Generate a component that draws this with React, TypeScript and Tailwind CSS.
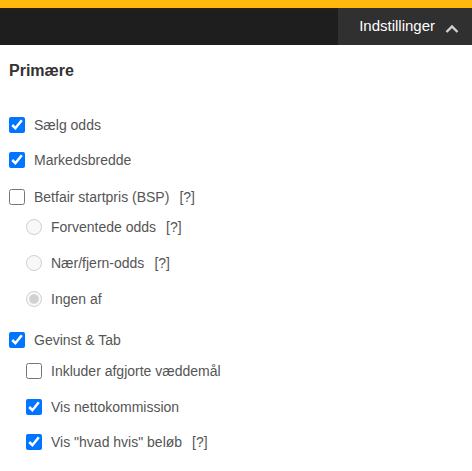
import React from "react";

type Row = {
  label: string;
  kind: "checkbox" | "radio";
  checked?: boolean;
  disabled?: boolean;
  nested?: boolean;
  help?: boolean;
  mt: string;
};

const rows: Row[] = [
  { label: "Sælg odds", kind: "checkbox", checked: true, mt: "mt-0" },
  { label: "Markedsbredde", kind: "checkbox", checked: true, mt: "mt-[5px]" },
  { label: "Betfair startpris (BSP)", kind: "checkbox", help: true, mt: "mt-[7px]" },
  { label: "Forventede odds", kind: "radio", disabled: true, nested: true, help: true, mt: "mt-0" },
  { label: "Nær/fjern-odds", kind: "radio", disabled: true, nested: true, help: true, mt: "mt-[6px]" },
  { label: "Ingen af", kind: "radio", checked: true, disabled: true, nested: true, mt: "mt-[6px]" },
  { label: "Gevinst & Tab", kind: "checkbox", checked: true, mt: "mt-[11px]" },
  { label: "Inkluder afgjorte væddemål", kind: "checkbox", nested: true, mt: "mt-[1px]" },
  { label: "Vis nettokommission", kind: "checkbox", checked: true, nested: true, mt: "mt-[6px]" },
  { label: "Vis \"hvad hvis\" beløb", kind: "checkbox", checked: true, nested: true, help: true, mt: "mt-[5px]" },
];

function OptionRow({ row }: { row: Row }) {
  return (
    <label
      className={`flex h-[30px] items-center ${row.mt} ${row.nested ? "pl-[26px]" : "pl-[9px]"}`}
    >
      <input
        type={row.kind}
        name={row.kind === "radio" ? "bsp" : undefined}
        defaultChecked={row.checked}
        disabled={row.disabled}
        className="m-0 h-4 w-4 accent-[#0075ff]"
      />
      <span className="ml-[9px] text-[14px] text-[#555]">{row.label}</span>
      {row.help && <span className="ml-[10px] text-[14px] text-[#555]">[?]</span>}
    </label>
  );
}

export default function App() {
  return (
    <div className="h-[471px] w-[472px] overflow-hidden bg-white font-['Liberation_Sans',Arial,sans-serif]">
      {/* Top bar */}
      <div className="h-2 bg-[#ffb80c]" />
      <div className="flex h-[37px] justify-end border-t-[3px] border-[#241e14] bg-[#1e1e1e]">
        <button className="-mt-[3px] flex items-center bg-[#303030] pl-[21px] pr-[13px] text-[15px] text-white">
          Indstillinger
          <svg
            width="14"
            height="10"
            viewBox="0 0 14 10"
            className="ml-[10px] mt-[4px]"
            fill="none"
            stroke="#d0d0d0"
            strokeWidth="2.4"
          >
            <path d="M1.5 8 L7 2.5 L12.5 8" />
          </svg>
        </button>
      </div>

      {/* Settings */}
      <h2 className="mt-4 pl-[9px] text-[16px] font-bold leading-5 text-[#333]">Primære</h2>
      <div className="mt-[29px] flex flex-col">
        {rows.map((r) => (
          <OptionRow key={r.label} row={r} />
        ))}
      </div>
    </div>
  );
}
